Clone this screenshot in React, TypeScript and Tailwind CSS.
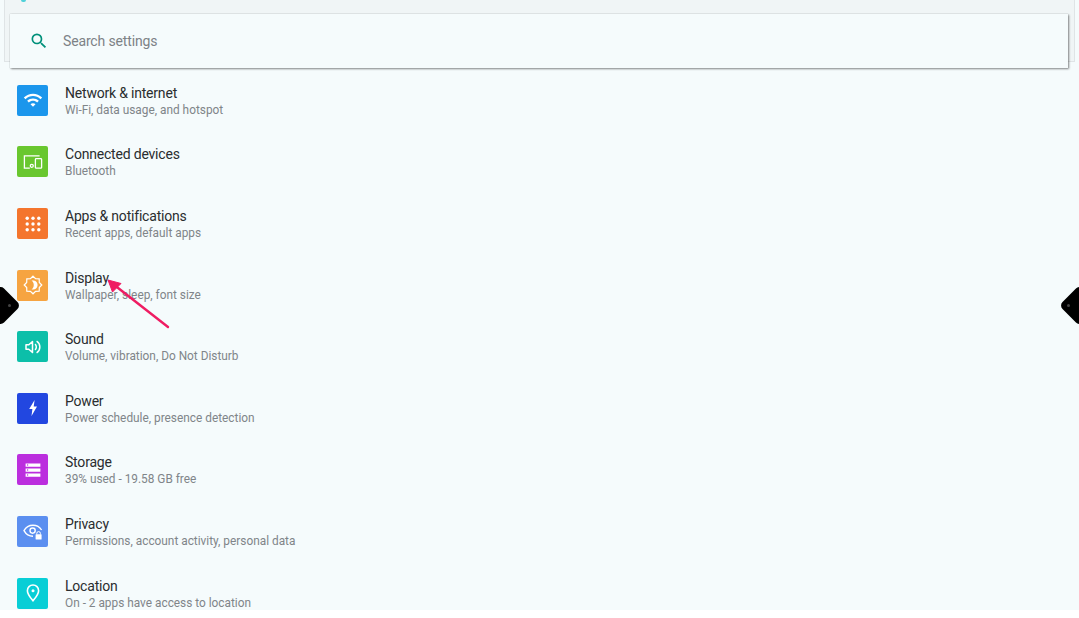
import type { ReactNode } from "react";

const FONT = "font-['Roboto','Liberation_Sans',sans-serif]";

interface Item {
  title: string;
  sub: string;
  color: string;
  icon: ReactNode;
}

const items: Item[] = [
  {
    title: "Network & internet",
    sub: "Wi-Fi, data usage, and hotspot",
    color: "bg-[#1b96ec]",
    icon: (
      <svg viewBox="0 0 24 24" className="h-[20px] w-[20px]" fill="currentColor">
        <path d="M1 9l2 2c4.97-4.97 13.03-4.97 18 0l2-2C16.93 2.93 7.08 2.93 1 9zm8 8l3 3 3-3c-1.65-1.66-4.34-1.66-6 0zm-4-4l2 2c2.76-2.76 7.24-2.76 10 0l2-2C15.14 9.14 8.87 9.14 5 13z" />
      </svg>
    ),
  },
  {
    title: "Connected devices",
    sub: "Bluetooth",
    color: "bg-[#69c72f]",
    icon: (
      <svg viewBox="0 0 20 20" className="h-[20px] w-[20px]" fill="none" stroke="currentColor" strokeWidth="1.3">
        <path d="M6.8 16.2H1.4V3.8H16.6" />
        <rect x="12.4" y="6.6" width="6.2" height="9.6" rx="0.8" />
        <circle cx="8.8" cy="13.8" r="1.5" />
      </svg>
    ),
  },
  {
    title: "Apps & notifications",
    sub: "Recent apps, default apps",
    color: "bg-[#f4752d]",
    icon: (
      <svg viewBox="0 0 20 20" className="h-[20px] w-[20px]" fill="currentColor">
        {[4.2, 10, 15.8].flatMap((y) =>
          [4.2, 10, 15.8].map((x) => <circle key={`${x}-${y}`} cx={x} cy={y} r="1.7" />),
        )}
      </svg>
    ),
  },
  {
    title: "Display",
    sub: "Wallpaper, sleep, font size",
    color: "bg-[#f6a441]",
    icon: (
      <svg viewBox="0 0 20 20" className="h-[20px] w-[20px]" fill="none" stroke="currentColor" strokeWidth="1.2">
        <path d="M10 1.2 12.6 3.7 16.2 3.8 16.3 7.4 18.8 10 16.3 12.6 16.2 16.2 12.6 16.3 10 18.8 7.4 16.3 3.8 16.2 3.7 12.6 1.2 10 3.7 7.4 3.8 3.8 7.4 3.7Z" />
        <path d="M10 6a4 4 0 0 1 0 8c1-1 1.4-2.4 1.4-4S11 7 10 6Z" fill="currentColor" />
      </svg>
    ),
  },
  {
    title: "Sound",
    sub: "Volume, vibration, Do Not Disturb",
    color: "bg-[#0cbfa9]",
    icon: (
      <svg viewBox="0 0 20 20" className="h-[20px] w-[20px]" fill="none" stroke="currentColor" strokeWidth="1.5">
        <path d="M3 7.800v4.400h2.800l3.700 3.200V4.600L5.800 7.800Z" strokeLinejoin="round" />
        <path d="M12 7.200a3.600 3.600 0 0 1 0 5.600" />
        <path d="M13.600 4.200a6.800 6.800 0 0 1 0 11.600" />
      </svg>
    ),
  },
  {
    title: "Power",
    sub: "Power schedule, presence detection",
    color: "bg-[#2247e0]",
    icon: (
      <svg viewBox="0 0 20 20" className="h-[20px] w-[20px]" fill="currentColor">
        <path d="M11.600 2 6.200 11h3.200l-.9 7 5.500-9.600h-3.300Z" />
      </svg>
    ),
  },
  {
    title: "Storage",
    sub: "39% used - 19.58 GB free",
    color: "bg-[#bb2ede]",
    icon: (
      <svg viewBox="0 0 20 20" className="h-[20px] w-[20px]" fill="currentColor">
        <path d="M2.600 3.400h14.800v3.300H2.600ZM2.600 8.400h14.800v3.300H2.600ZM2.600 13.400h14.800v3.300H2.600Z" />
        <circle cx="4.600" cy="5" r="0.700" fill="#bb2ede" />
        <circle cx="4.600" cy="10" r="0.700" fill="#bb2ede" />
        <circle cx="4.600" cy="15" r="0.700" fill="#bb2ede" />
      </svg>
    ),
  },
  {
    title: "Privacy",
    sub: "Permissions, account activity, personal data",
    color: "bg-[#5b8ff0]",
    icon: (
      <svg viewBox="0 0 20 20" className="h-[20px] w-[20px]" fill="none" stroke="currentColor" strokeWidth="1.4">
        <path d="M18.600 8C16.800 5 13.600 3.200 10 3.200S3 5 1 8.600c2 3.600 5.200 5.600 9 5.600" />
        <circle cx="9.600" cy="8.600" r="2.600" />
        <rect x="12.600" y="12.200" width="6" height="5.400" rx="0.600" fill="currentColor" stroke="none" />
        <path d="M13.800 12.400v-1a1.800 1.800 0 0 1 3.600 0v1" strokeWidth="1" />
      </svg>
    ),
  },
  {
    title: "Location",
    sub: "On - 2 apps have access to location",
    color: "bg-[#08ced6]",
    icon: (
      <svg viewBox="0 0 20 20" className="h-[20px] w-[20px]" fill="none" stroke="currentColor" strokeWidth="1.6">
        <path d="M10 2c-3.200 0-5.600 2.500-5.600 5.700 0 3.700 3.400 7.300 5.600 10.100 2.200-2.800 5.600-6.400 5.600-10.100C15.600 4.500 13.200 2 10 2Z" />
        <circle cx="10" cy="7.800" r="1.500" fill="currentColor" stroke="none" />
      </svg>
    ),
  },
];

function SettingRow({ item }: { item: Item }) {
  return (
    <div className="flex h-[61.6px] shrink-0 items-center gap-[17px] pl-[17px]">
      <div className={`flex h-[31px] w-[31px] shrink-0 items-center justify-center rounded-[2px] text-white ${item.color}`}>
        {item.icon}
      </div>
      <div className="min-w-0 pt-[1px]">
        <div className="text-[14px] leading-[18px] tracking-[-0.2px] text-[#2a2d2f]">{item.title}</div>
        <div className="text-[11.85px] leading-[16px] text-[#808589]">{item.sub}</div>
      </div>
    </div>
  );
}

// poignées noires sur les bords de l'écran
function SideHandle({ side }: { side: "left" | "right" }) {
  const left = side === "left";
  return (
    <>
      <div
        className={`absolute top-[290.5px] h-[29px] w-[29px] rotate-45 rounded-[5px] bg-black ${left ? "left-[-14.5px]" : "right-[-14.5px]"}`}
      />
      <div
        className={`absolute top-[303.5px] h-[3px] w-[3px] rounded-full bg-[#444] ${left ? "left-[8px]" : "right-[9.5px]"}`}
      />
    </>
  );
}

export default function App() {
  return (
    <div className={`relative h-[618px] w-[1079px] overflow-hidden bg-white ${FONT}`}>
      <div className="relative h-[610px] overflow-hidden bg-[#f5fbfc]">
        <div className="relative mx-[4px] h-[62px] border-x border-b border-[#dfe4e6] bg-[#f0f5f6] pl-[5px] pr-[6px] pt-[14px]">
          <div className="absolute left-[16px] top-0 h-[1.5px] w-[5px] rounded-b-full bg-[#4fd0d8]" />
          <div className="relative z-10 flex h-[54px] items-center gap-[14px] bg-[#f5fbfc] pl-[19px] shadow-[1px_1px_2px_rgba(0,0,0,0.45),0_0_1px_rgba(0,0,0,0.25)]">
            <svg viewBox="0 0 24 24" className="h-[20px] w-[20px] text-[#00907a]" fill="currentColor">
              <path d="M15.5 14h-.79l-.28-.27A6.471 6.471 0 0 0 16 9.5 6.500 6.500 0 1 0 9.500 16c1.610 0 3.090-.59 4.230-1.570l.27.28v.79l5 4.990L20.490 19l-4.990-5zm-6 0C7.010 14 5 11.990 5 9.500S7.010 5 9.500 5 14 7.010 14 9.500 11.990 14 9.500 14z" />
            </svg>
            <span className="text-[14px] tracking-[-0.15px] text-[#7d8286]">Search settings</span>
          </div>
        </div>
        <div className="flex flex-col pt-[7.6px]">
          {items.map((item) => (
            <SettingRow key={item.title} item={item} />
          ))}
        </div>

        <SideHandle side="left" />
        <SideHandle side="right" />

        <svg className="absolute left-[100px] top-[272px] h-[64px] w-[80px]" viewBox="0 0 80 64" fill="none">
          <path d="M68 55 13 12" stroke="#ef1c62" strokeWidth="2.4" strokeLinecap="round" />
          <path d="M8 8 21 11.500 12.500 20Z" fill="#ef1c62" stroke="#ef1c62" strokeLinejoin="round" />
        </svg>
      </div>
    </div>
  );
}
